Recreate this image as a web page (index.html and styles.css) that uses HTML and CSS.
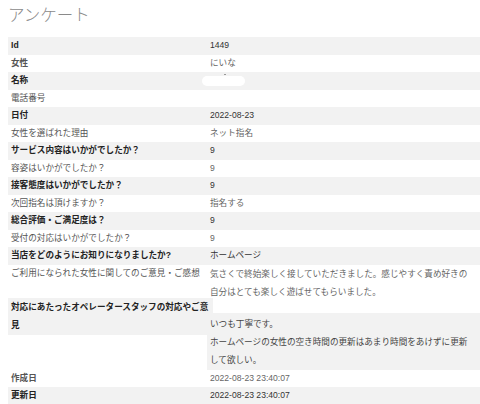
FILE: index.html
```html
<!DOCTYPE html>
<html lang="ja">
<head>
<meta charset="utf-8">
<title>アンケート</title>
<link rel="stylesheet" href="styles.css">
</head>
<body>
<div class="page">
  <h1 class="title">アンケート</h1>
  <div class="table">
    <div class="row odd"><div class="k">Id</div><div class="v">1449</div></div>
    <div class="row"><div class="k semi">女性</div><div class="v">にいな</div></div>
    <div class="row odd"><div class="k">名称</div><div class="v"><span class="mask"><span class="tick"></span></span></div></div>
    <div class="row"><div class="k">電話番号</div><div class="v"></div></div>
    <div class="row odd"><div class="k">日付</div><div class="v">2022-08-23</div></div>
    <div class="row"><div class="k">女性を選ばれた理由</div><div class="v">ネット指名</div></div>
    <div class="row odd"><div class="k">サービス内容はいかがでしたか？</div><div class="v">9</div></div>
    <div class="row"><div class="k">容姿はいかがでしたか？</div><div class="v">9</div></div>
    <div class="row odd"><div class="k">接客態度はいかがでしたか？</div><div class="v">9</div></div>
    <div class="row"><div class="k">次回指名は頂けますか？</div><div class="v">指名する</div></div>
    <div class="row odd"><div class="k">総合評価・ご満足度は？</div><div class="v">9</div></div>
    <div class="row"><div class="k">受付の対応はいかがでしたか？</div><div class="v">9</div></div>
    <div class="row odd"><div class="k">当店をどのようにお知りになりましたか?</div><div class="v">ホームページ</div></div>
    <div class="row multi"><div class="k">ご利用になられた女性に関してのご意見・ご感想</div><div class="v">気さくで終始楽しく接していただきました。感じやすく責め好きの自分はとても楽しく遊ばせてもらいました。</div></div>
    <div class="row odd split"><div class="k">対応にあたったオペレータースタッフの対応やご意見</div><div class="v">いつも丁寧です。<br>ホームページの女性の空き時間の更新はあまり時間をあけずに更新して欲しい。</div></div>
    <div class="row"><div class="k semi">作成日</div><div class="v">2022-08-23 23:40:07</div></div>
    <div class="row odd"><div class="k">更新日</div><div class="v">2022-08-23 23:40:07</div></div>
  </div>
</div>
</body>
</html>
```

FILE: styles.css
```css
html, body {
  margin: 0;
  padding: 0;
  background: #ffffff;
}

.page {
  padding-left: 8px;
  font-family: "Liberation Sans", "Noto Sans CJK JP", sans-serif;
}

.title {
  margin: 4px 0 13px 0;
  font-size: 16.5px;
  line-height: 20px;
  font-weight: 300;
  color: #8a8a8a;
  font-family: "Noto Sans CJK JP", sans-serif;
}

.table {
  display: flex;
  flex-direction: column;
  font-size: 8.6px;
}

.row {
  display: flex;
  align-items: stretch;
  line-height: 17.5px;
  min-height: 17.5px;
}

.row.odd {
  background: #f2f2f2;
}

.k {
  width: 196px;
  flex: none;
  padding-left: 3px;
  color: #555;
  font-weight: 400;
}

.k.semi {
  font-weight: 700;
  color: #555;
}

.row.odd .k {
  font-weight: 700;
  color: #222;
}

.v {
  flex: 1;
  min-width: 0;
  padding-left: 3px;
  padding-right: 8px;
  color: #666;
}

.row.odd .v {
  color: #333;
}

.row.multi .v {
  line-height: 18px;
  padding-top: 0;
  padding-bottom: 0;
  margin-bottom: -3px;
}

.row.multi .k {
  line-height: 17.5px;
}

.row.split {
  background: transparent;
  align-items: flex-start;
}

.row.split .k {
  width: 202px;
  background: #f2f2f2;
  line-height: 18px;
  padding-bottom: 1px;
}

.row.split .v {
  margin-left: -6px;
  margin-top: 15px;
  background: #f2f2f2;
  line-height: 18px;
  padding-top: 2px;
  padding-bottom: 1px;
  color: #444;
}

.mask {
  display: inline-block;
  position: relative;
  margin-left: -8px;
  width: 43px;
  height: 10px;
  border-radius: 5px;
  background: #ffffff;
  vertical-align: middle;
}

.tick {
  position: absolute;
  left: 22px;
  top: -2px;
  width: 2px;
  height: 1px;
  background: #999;
}
```
